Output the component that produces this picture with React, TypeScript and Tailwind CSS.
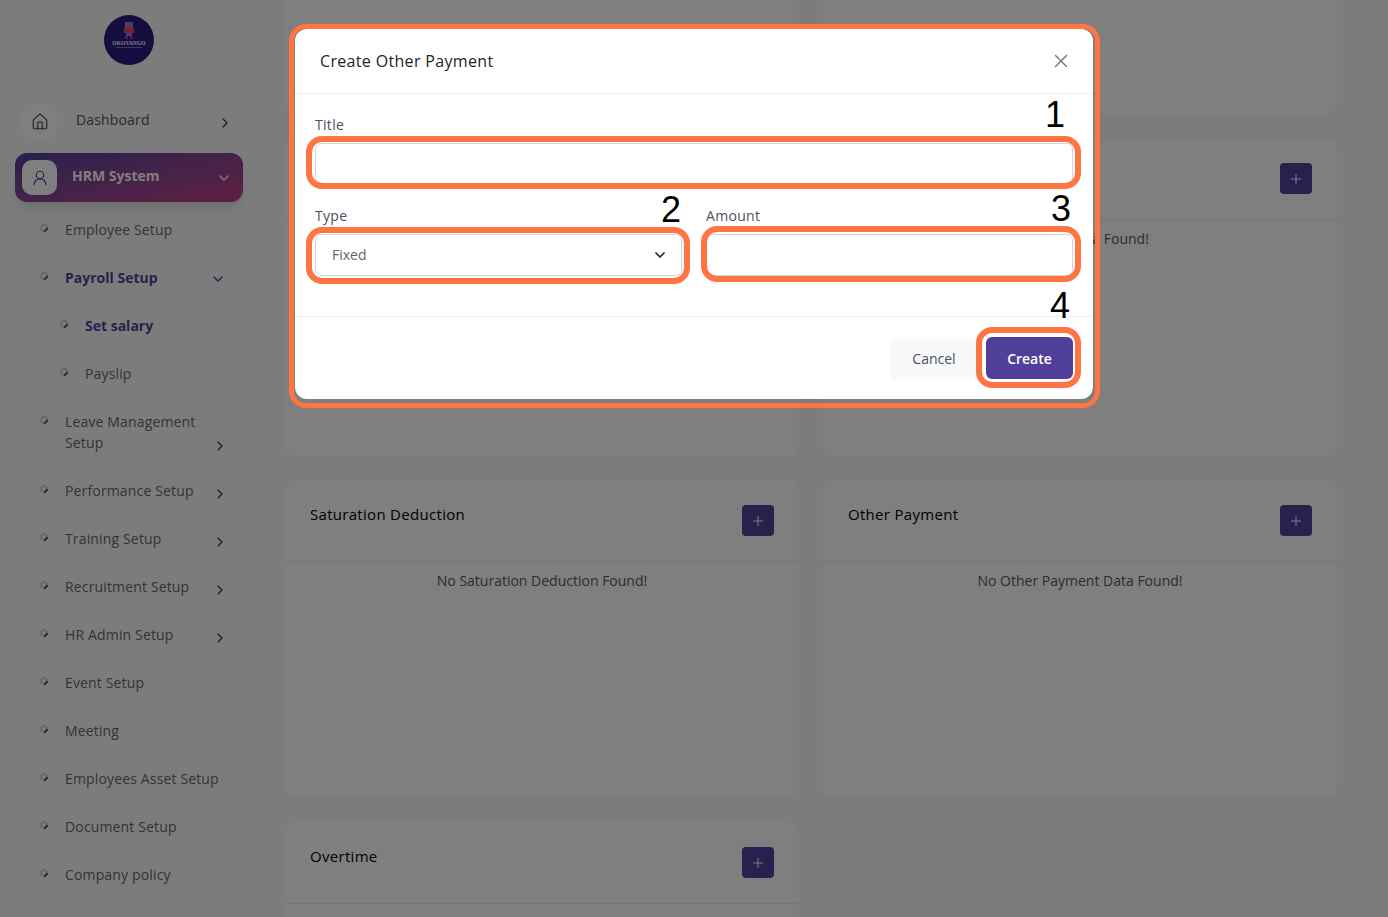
import React from 'react';
import { ChevronDown, ChevronRight, Home, Plus, UserRound, X } from 'lucide-react';

interface NavItem {
  label: string;
  arrow?: 'right' | 'down';
  active?: boolean;
  sub?: boolean;
  tall?: boolean;
}

const navItems: NavItem[] = [
  { label: 'Employee Setup' },
  { label: 'Payroll Setup', arrow: 'down', active: true },
  { label: 'Set salary', active: true, sub: true },
  { label: 'Payslip', sub: true },
  { label: 'Leave Management Setup', arrow: 'right', tall: true },
  { label: 'Performance Setup', arrow: 'right' },
  { label: 'Training Setup', arrow: 'right' },
  { label: 'Recruitment Setup', arrow: 'right' },
  { label: 'HR Admin Setup', arrow: 'right' },
  { label: 'Event Setup' },
  { label: 'Meeting' },
  { label: 'Employees Asset Setup' },
  { label: 'Document Setup' },
  { label: 'Company policy' },
];

// the first row is scrolled out of view, only its bottom edge shows
const cards = [
  { id: 'top-left', title: '', empty: '' },
  { id: 'top-right', title: '', empty: '' },
  { id: 'deduction', title: 'Deduction', empty: 'No Deduction Data Found!' },
  { id: 'loan', title: 'Loan', empty: 'No Loan Data Found!' },
  { id: 'saturation', title: 'Saturation Deduction', empty: 'No Saturation Deduction Found!' },
  { id: 'other', title: 'Other Payment', empty: 'No Other Payment Data Found!' },
  { id: 'overtime', title: 'Overtime', empty: '' },
];

const Logo = () => (
  <div className="mx-auto flex h-[50px] w-[50px] flex-col items-center rounded-full bg-[#2a1a80] pt-[7px]">
    <svg width="10" height="17" viewBox="0 0 10 17">
      <rect x="1" y="0" width="8" height="6" fill="#a76fd0" />
      <rect x="0" y="6" width="10" height="5" fill="#e0455a" />
      <rect x="2" y="11" width="6" height="3" fill="#a76fd0" />
      <rect x="1" y="14" width="3" height="3" fill="#7c4fa8" />
      <rect x="6" y="14" width="3" height="3" fill="#7c4fa8" />
    </svg>
    <span className="mt-[1px] text-[5.5px] leading-[7px] font-bold tracking-[0.1px] text-white [font-family:'Liberation_Serif',serif]">
      OKOVANGO
    </span>
    <span className="h-[1px] w-[26px] bg-[#8a6fc0]" />
  </div>
);

const Bullet = ({ className = '' }: { className?: string }) => (
  <span className={`h-2 w-2 shrink-0 rotate-45 rounded-full border-2 border-[#d0d0dc] border-r-[#51409b] ${className}`} />
);

const Sidebar = () => (
  <aside className="w-[262px] shrink-0 pt-[15px]">
    <div className="pr-[4px]">
      <Logo />
    </div>
    <div className="mt-[39px] flex h-[35px] items-center pl-[22px]">
      <span className="flex h-[35px] w-[35px] items-center justify-center rounded-[10px] bg-white">
        <Home className="h-[18px] w-[18px] text-[#3f4254]" strokeWidth={1.5} />
      </span>
      <span className="ml-[19px] -translate-y-[2px] text-sm font-medium tracking-[0.15px] text-[#555559]">Dashboard</span>
      <ChevronRight className="ml-auto mr-[29px] h-4 w-4 translate-y-[1px] text-[#3f4254]" />
    </div>
    <div className="mx-[15px] mt-[14px] flex h-[49px] w-[228px] items-center rounded-[12px] bg-gradient-to-br from-[#4f3f9c] to-[#c23d86] pl-[7px] shadow-lg">
      <span className="flex h-[35px] w-[35px] items-center justify-center rounded-[10px] bg-white">
        <UserRound className="h-[18px] w-[18px] text-[#51409b]" strokeWidth={1.5} />
      </span>
      <span className="ml-[15px] -translate-y-[2px] text-sm font-bold text-white">HRM System</span>
      <ChevronDown className="ml-auto mr-[11px] h-4 w-4 text-white" />
    </div>
    <nav className="mt-[3px] text-sm tracking-[0.15px] text-[#67676c]">
      {navItems.map((item) => (
        <div
          key={item.label}
          className={`flex ${item.tall ? 'h-[69px] items-start pt-[14px]' : 'h-12 items-center'} ${item.sub ? 'pl-[60px]' : 'pl-[40px]'}`}
        >
          <Bullet className={item.tall ? 'mt-[5px]' : '-translate-y-[1px]'} />
          <span
            className={`ml-[17px] leading-[21px] ${item.tall ? 'w-[140px]' : ''} ${item.active ? 'font-bold tracking-normal text-[#51409b]' : ''}`}
          >
            {item.label}
          </span>
          {item.arrow === 'right' && (
            <ChevronRight className={`ml-auto mr-[34px] h-4 w-4 text-[#3f4254] ${item.tall ? 'mt-[27px]' : 'translate-y-[4px]'}`} />
          )}
          {item.arrow === 'down' && <ChevronDown className="ml-auto mr-[36px] h-4 w-4 translate-y-[2px] text-[#51409b]" />}
        </div>
      ))}
    </nav>
  </aside>
);

const Card = ({ title, empty }: { title: string; empty: string }) => (
  <section className="h-[318px] rounded-xl bg-white">
    {title && (
      <>
        <header className="flex h-[82px] items-start justify-between border-b border-[#eceef1] px-[25px] pt-[25px]">
          <h3 className="text-[15px] leading-[18px] font-medium tracking-[0.3px] text-black">{title}</h3>
          <button className="flex h-[31px] w-8 items-center justify-center rounded bg-[#51409b] text-white">
            <Plus className="h-4 w-4" strokeWidth={1.5} />
          </button>
        </header>
        <p className="pt-[9px] text-center text-sm leading-5 text-[#555a64]">{empty}</p>
      </>
    )}
  </section>
);

const Ring = ({ className }: { className: string }) => (
  <div className={`pointer-events-none absolute border-[#ff7443] ${className}`} />
);

const Mark = ({ className, children }: { className: string; children: React.ReactNode }) => (
  <span className={`absolute text-[36px] leading-none text-black [font-family:'Liberation_Sans',sans-serif] ${className}`}>
    {children}
  </span>
);

const Modal = () => (
  <div className="relative h-[370px] w-[798px] rounded-xl bg-white">
    <div className="flex h-[65px] items-center justify-between border-b border-[#eceef1] pl-[25px] pr-[21px]">
      <h2 className="text-base font-medium tracking-[0.33px] text-[#212529]">Create Other Payment</h2>
      <X className="h-[22px] w-[22px] text-[#777]" strokeWidth={1.5} />
    </div>
    <form className="border-b border-[#eceef1] px-5 pt-[21px] pb-[40px]">
      <label className="mb-2 block text-sm leading-5 font-medium tracking-[0.3px] text-[#4a5160]">Title</label>
      <input className="h-[41px] w-full rounded-md border border-[#d3d6e0] bg-white" />
      <div className="mt-[22px] grid grid-cols-2 gap-6">
        <div>
          <label className="mb-2 block text-sm leading-5 font-medium tracking-[0.3px] text-[#4a5160]">Type</label>
          <div className="flex h-[42px] items-center justify-between rounded-md border border-[#d3d6e0] pl-[16px] pr-[13px] text-sm text-[#5e6470]">
            Fixed
            <ChevronDown className="h-4 w-4 text-[#212529]" strokeWidth={2.5} />
          </div>
        </div>
        <div>
          <label className="mb-2 block text-sm leading-5 font-medium tracking-[0.3px] text-[#4a5160]">Amount</label>
          <input className="h-[42px] w-full rounded-md border border-[#d3d6e0] bg-white" />
        </div>
      </div>
    </form>
    <div className="flex justify-end gap-2 px-5 pt-5">
      <button className="h-[42px] w-[88px] rounded-md bg-[#f8f9fa] pt-[2px] text-sm font-medium text-[#4a5160]">Cancel</button>
      <button className="h-[42px] w-[87px] rounded-md bg-[#51409b] pt-[2px] text-sm font-semibold text-white">Create</button>
    </div>

    <Ring className="-top-[5px] -left-[6px] h-[384px] w-[811px] rounded-[17px] border-[5px]" />
    <Ring className="top-[107px] left-[11px] h-[53px] w-[775px] rounded-[16px] border-[6px]" />
    <Ring className="top-[198px] left-[11px] h-[57px] w-[384px] rounded-[16px] border-[6px]" />
    <Ring className="top-[197px] left-[406px] h-[56px] w-[380px] rounded-[16px] border-[6px]" />
    <Ring className="top-[298px] left-[681px] h-[61px] w-[105px] rounded-[16px] border-[6px]" />
    <Mark className="top-[68px] left-[750px]">1</Mark>
    <Mark className="top-[163px] left-[366px]">2</Mark>
    <Mark className="top-[162px] left-[756px]">3</Mark>
    <Mark className="top-[259px] left-[755px]">4</Mark>
  </div>
);

export default function App() {
  return (
    <div className="relative flex h-[917px] overflow-hidden bg-[#f8f9fa] [font-family:'Open_Sans',sans-serif]">
      <Sidebar />
      <main className="-mt-[204px] ml-[23px] grid w-[1052px] shrink-0 grid-cols-2 content-start gap-6">
        {cards.map((card) => (
          <Card key={card.id} title={card.title} empty={card.empty} />
        ))}
      </main>
      <div className="absolute inset-0 flex items-start justify-center bg-black/50 pt-[29px]">
        <Modal />
      </div>
    </div>
  );
}
